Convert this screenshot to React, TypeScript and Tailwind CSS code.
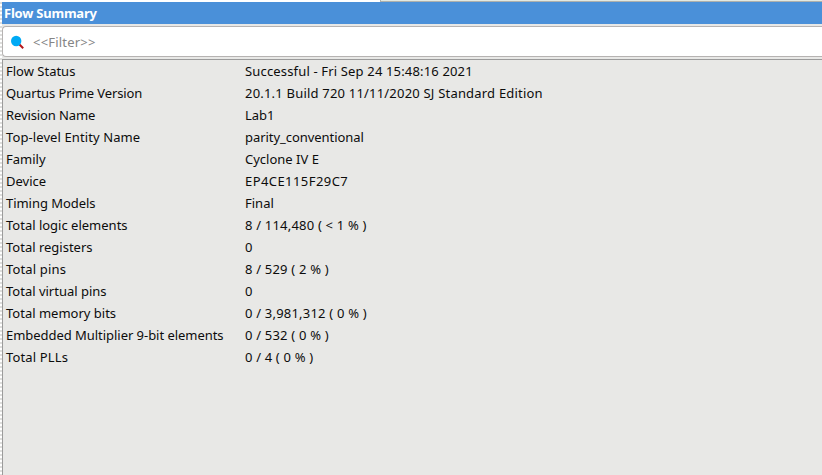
type Row = { label: string; value: string; labelTracking?: string; valueTracking?: string };

const rows: Row[] = [
  { label: 'Flow Status', value: 'Successful - Fri Sep 24 15:48:16 2021', valueTracking: 'tracking-[0.16px]' },
  { label: 'Quartus Prime Version', value: '20.1.1 Build 720 11/11/2020 SJ Standard Edition', labelTracking: 'tracking-[-0.1px]', valueTracking: 'tracking-[0.2px]' },
  { label: 'Revision Name', value: 'Lab1', labelTracking: 'tracking-[-0.1px]' },
  { label: 'Top-level Entity Name', value: 'parity_conventional', labelTracking: 'tracking-[0.1px]', valueTracking: 'tracking-[-0.05px]' },
  { label: 'Family', value: 'Cyclone IV E' },
  { label: 'Device', value: 'EP4CE115F29C7', valueTracking: 'tracking-[0.43px]' },
  { label: 'Timing Models', value: 'Final', labelTracking: 'tracking-[-0.05px]' },
  { label: 'Total logic elements', value: '8 / 114,480 ( < 1 % )', valueTracking: 'tracking-[0.2px]' },
  { label: 'Total registers', value: '0' },
  { label: 'Total pins', value: '8 / 529 ( 2 % )', labelTracking: 'tracking-[0.15px]', valueTracking: 'tracking-[0.2px]' },
  { label: 'Total virtual pins', value: '0' },
  { label: 'Total memory bits', value: '0 / 3,981,312 ( 0 % )', valueTracking: 'tracking-[0.2px]' },
  { label: 'Embedded Multiplier 9-bit elements', value: '0 / 532 ( 0 % )', labelTracking: 'tracking-[-0.04px]', valueTracking: 'tracking-[0.2px]' },
  { label: 'Total PLLs', value: '0 / 4 ( 0 % )', labelTracking: 'tracking-[0.15px]', valueTracking: 'tracking-[0.17px]' },
];

function SearchIcon() {
  return (
    <svg className="mt-px ml-[7px] h-[14px] w-[14px] shrink-0" viewBox="0 0 14 14">
      <path d="M9 9 13.2 13.2" stroke="#b5161b" strokeWidth="2" />
      <circle cx="6.2" cy="6" r="5.2" fill="#00aaf5" />
    </svg>
  );
}

export default function App() {
  return (
    <div className="flex h-[475px] w-[822px] overflow-hidden bg-[#e8e8e6] font-['Noto_Sans','Open_Sans',sans-serif] text-[13px] text-[#0c0c0c]">
      <div className="w-[2px] shrink-0 bg-[repeating-linear-gradient(to_bottom,#ffffff_0px,#ffffff_2px,#dededc_2px,#dededc_4px)]" />
      <div className="flex min-w-0 flex-1 flex-col">
        <div className="flex h-[2px] shrink-0 bg-white">
          <div className="ml-[378px] flex-1 border-b border-l border-[#adb0ad] bg-[#e2e8e1]" />
        </div>
        <div className="flex h-[22px] shrink-0 items-center bg-[#4a90d9] pt-[2px] pl-[2px] font-bold tracking-[-0.22px] text-white">
          <span>Flow Summary</span>
        </div>
        <div className="mt-[2px] flex h-[31px] shrink-0 items-center rounded-l-[4px] border border-r-0 border-[#b6b3b2] bg-white">
          <SearchIcon />
          <span className="mt-[2px] ml-[9px] tracking-[0.2px] text-[#858585]">&lt;&lt;Filter&gt;&gt;</span>
        </div>
        <div className="mt-[2px] flex flex-1 flex-col border-l border-t border-[#9b9b9b]">
          {rows.map((row) => (
            <div key={row.label} className="flex h-[22px] shrink-0 items-center whitespace-pre pt-px pl-[3px]">
              <span className="w-[239px] shrink-0">
                <span className={row.labelTracking}>{row.label}</span>
              </span>
              <span className={row.valueTracking}>{row.value}</span>
            </div>
          ))}
        </div>
      </div>
    </div>
  );
}
